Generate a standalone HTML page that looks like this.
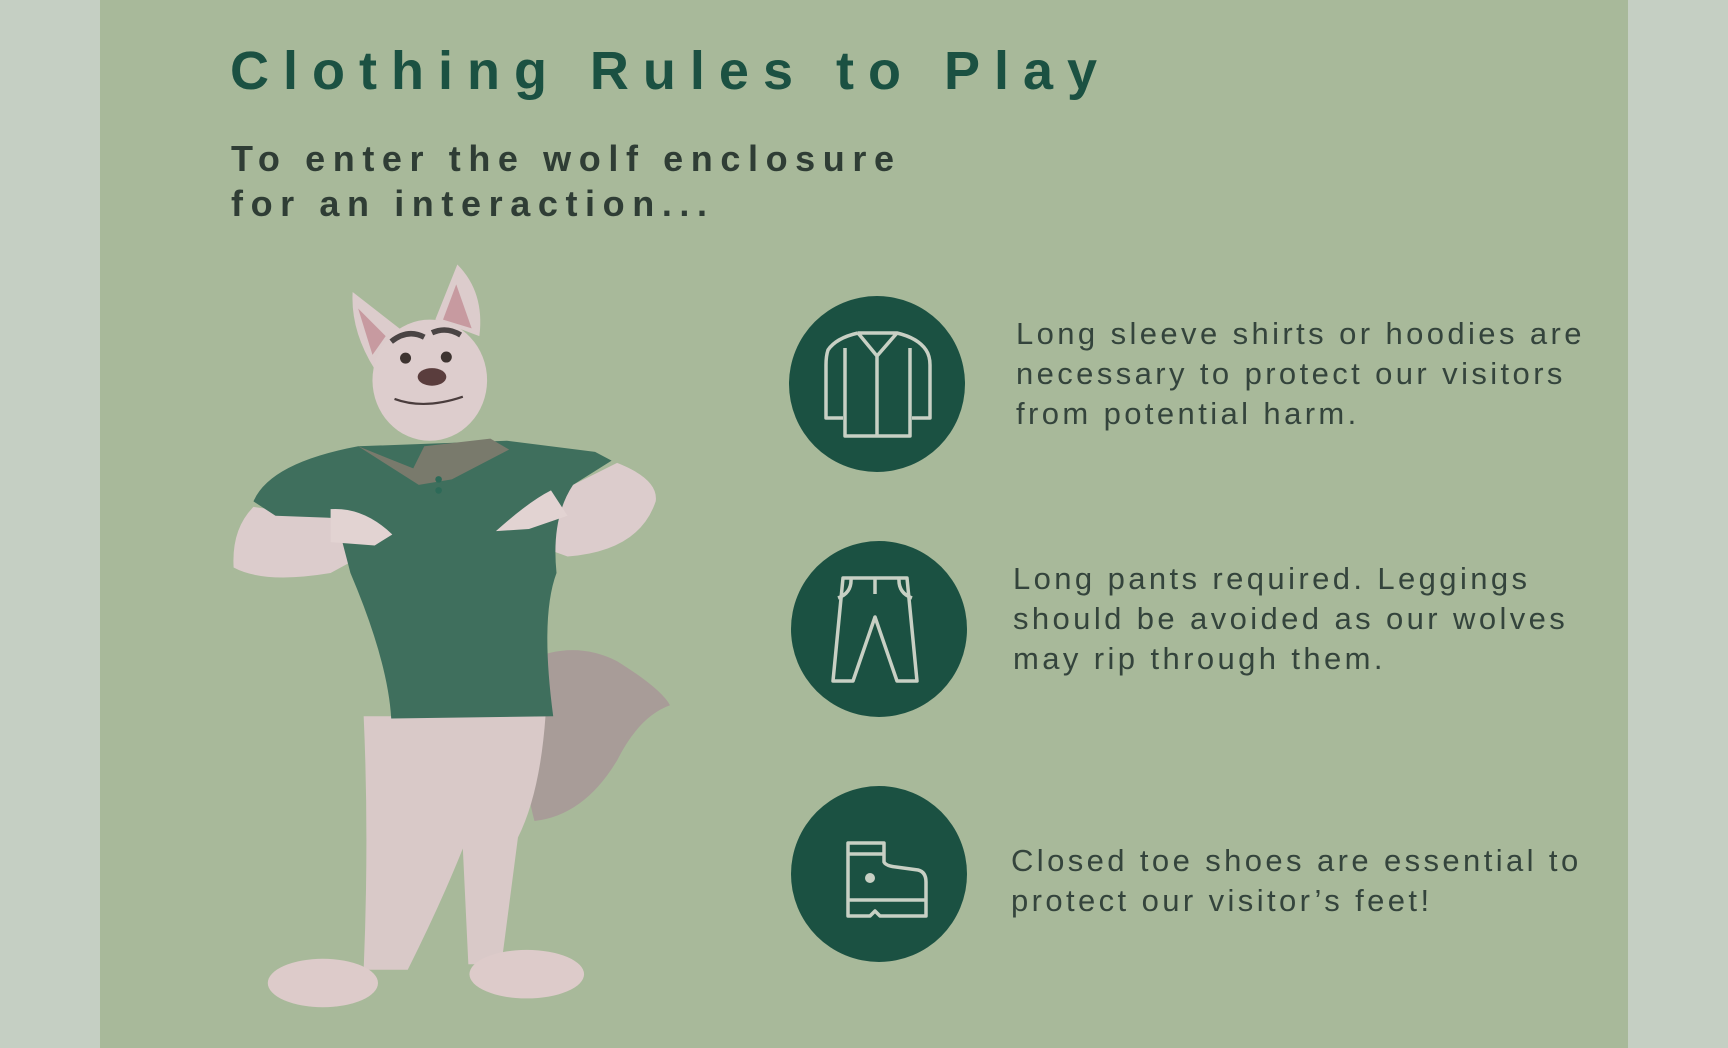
<!DOCTYPE html>
<html><head><meta charset="utf-8"><style>
html,body{margin:0;padding:0}
body{width:1728px;height:1048px;background:#c5cfc3;position:relative;overflow:hidden;font-family:"Liberation Sans",sans-serif}
.panel{position:absolute;left:100px;top:0;width:1528px;height:1048px;background:#a8b99a}
.t{position:absolute;white-space:nowrap}
h1{position:absolute;left:230px;top:40px;margin:0;font-size:54px;font-weight:bold;letter-spacing:14px;color:#1b5142;white-space:nowrap}
.sub{left:231px;top:136px;font-size:36px;font-weight:bold;letter-spacing:7.6px;line-height:45px;color:#2f3d35}
.b{font-size:31px;line-height:40px;letter-spacing:3.4px;color:#34443c}
svg{position:absolute;left:0;top:0}
</style></head><body>
<div class="panel"></div>
<h1>Clothing Rules to Play</h1>
<div class="t sub">To enter the wolf enclosure<br>for an interaction...</div>
<div class="t b" style="left:1016px;top:314px">Long sleeve shirts or hoodies are<br>necessary to protect our visitors<br>from potential harm.</div>
<div class="t b" style="left:1013px;top:559px">Long pants required. Leggings<br>should be avoided as our wolves<br>may rip through them.</div>
<div class="t b" style="left:1011px;top:841px">Closed toe shoes are essential to<br>protect our visitor’s feet!</div>
<svg width="1728" height="1048" viewBox="0 0 1728 1048">
<g fill="#1b5142"><circle cx="877" cy="384" r="88"/><circle cx="879" cy="629" r="88"/><circle cx="879" cy="874" r="88"/></g>
<g fill="none" stroke="#c8d0c4" stroke-width="3.5" stroke-linejoin="round">
<path d="M858 333 L897 333 Q918 338 926 350 Q930 356 930 365 L930 418 L912 418 M858 333 Q836 338 828 350 Q826 356 826 365 L826 418 L843 418 M845 348 L845 436 L910 436 L910 348 M858 333 L877 356 L897 333 M877 356 L877 436"/>
<path d="M843 578 L907 578 L917 681 L897 681 L875 617 L853 681 L833 681 Z M875 578 L875 594 M851 578 Q852 593 838 598 M899 578 Q898 593 912 598"/>
<path d="M848 843 L884 843 L884 862 Q886 866 896 867 L918 870 Q926 872 926 882 L926 916 L880 916 L875 911 L870 916 L848 916 Z M848 854 L884 854 M848 900 L926 900"/>
</g>
<circle cx="870" cy="878" r="5" fill="#c8d0c4"/>
<g transform="scale(1.102)">
<path d="M478 600 Q520 580 560 600 Q600 625 608 640 Q580 650 560 690 Q530 740 485 745 Q470 690 478 600Z" fill="#a89c98"/>
<path d="M330 650 L495 650 Q490 720 470 760 L455 875 L425 875 L420 770 Q400 820 370 880 L330 880 Q335 760 330 650Z" fill="#d9c9c8"/>
<ellipse cx="293" cy="892" rx="50" ry="22" fill="#ddcbca"/>
<ellipse cx="478" cy="884" rx="52" ry="22" fill="#ddcbca"/>
<path d="M320 265 L365 300 L340 335 Q318 300 320 265Z" fill="#dccccc"/>
<path d="M325 280 L350 305 L338 322Z" fill="#c79aa0"/>
<path d="M415 240 L395 290 L435 305 Q440 265 415 240Z" fill="#dccccc"/>
<path d="M414 258 L402 290 L428 298Z" fill="#c79aa0"/>
<ellipse cx="390" cy="345" rx="52" ry="55" fill="#ddcdcd"/>
<path d="M355 310 Q370 298 385 306 M392 302 Q405 296 418 304" stroke="#4a4444" stroke-width="5" fill="none"/>
<circle cx="368" cy="325" r="5" fill="#3d3330"/><circle cx="405" cy="324" r="5" fill="#3d3330"/>
<ellipse cx="392" cy="342" rx="13" ry="8" fill="#5a3d3d"/>
<path d="M358 362 Q385 372 420 360" stroke="#4a3d3d" stroke-width="2" fill="none"/>
<path d="M230 460 Q210 480 212 515 Q240 530 300 520 L355 490 L350 478 L300 470Z" fill="#dccccc"/>
<path d="M560 420 Q598 435 595 455 Q580 500 515 505 L452 482 L470 468 L520 440Z" fill="#dccccc"/>
<path d="M325 405 L460 400 L540 410 L555 418 L520 440 Q500 470 505 520 Q490 560 502 650 L355 652 Q352 600 318 520 L305 470 L250 468 L230 455 Q245 420 325 405Z" fill="#3f6f5d"/>
<path d="M325 405 L375 425 L385 405 L445 398 L462 408 L410 435 L380 440Z" fill="#797a6c"/>
<circle cx="398" cy="435" r="3" fill="#2d6a58"/><circle cx="398" cy="445" r="3" fill="#2d6a58"/>
<path d="M300 462 Q330 460 356 485 L340 495 L300 492Z M450 482 Q480 455 500 445 L515 468 L480 480Z" fill="#e2d3d2"/>
</g>
</svg>
</body></html>
